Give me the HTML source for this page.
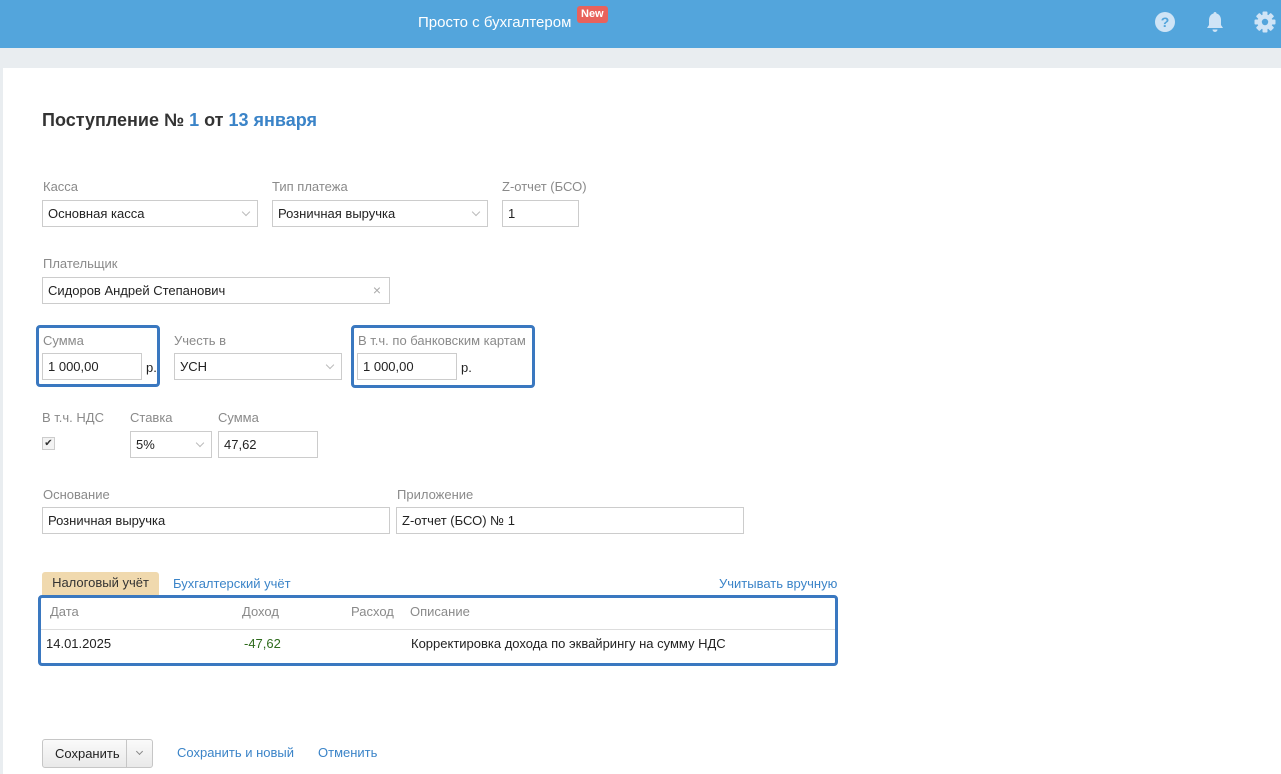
<!DOCTYPE html>
<html><head><meta charset="utf-8"><style>
*{box-sizing:border-box;margin:0;padding:0}
body{width:1281px;height:774px;overflow:hidden;background:#fff;font-family:"Liberation Sans",Arial,sans-serif;font-size:13px;color:#222;position:relative}
.a{position:absolute}
.hdr{left:0;top:0;width:1281px;height:48px;background:#53a5dc}
.band{left:0;top:48px;width:1281px;height:20px;background:#e9edf0}
.lstrip{left:0;top:68px;width:3px;height:706px;background:#e9edf0}
.lbl{color:#8a8a8a;font-size:13px}
.in{border:1px solid #ccc;height:27px;line-height:25px;padding-left:5px;background:#fff;font-size:13px;color:#222}
.chev{position:absolute;right:8px;top:8px;width:6px;height:6px;border-right:1px solid #bbb;border-bottom:1px solid #bbb;transform:rotate(45deg)}
.hl{border:3px solid #3a78c0;border-radius:4px}
.link{color:#3b84c8}
</style></head><body>
<div class="a hdr"></div>
<div class="a" style="left:418px;top:14px;color:#fff;font-size:15px">Просто с бухгалтером</div>
<div class="a" style="left:577px;top:6px;background:#e8625c;color:#fff;font-size:11px;font-weight:bold;padding:1px 4px;border-radius:3px;height:17px;line-height:15px">New</div>
<svg class="a" style="left:1154px;top:11px" width="22" height="22" viewBox="0 0 22 22"><circle cx="11" cy="11" r="10" fill="#cfe4f6"/><text x="11" y="16" text-anchor="middle" font-family="Liberation Sans" font-weight="bold" font-size="14" fill="#53a5dc">?</text></svg>
<svg class="a" style="left:1205px;top:11px" width="20" height="22" viewBox="0 0 20 22"><path d="M10 1c1 0 1.5.7 1.5 1.5C14.5 3.3 16 6 16 9v5l2 3H2l2-3V9c0-3 1.5-5.7 4.5-6.5C8.5 1.7 9 1 10 1z" fill="#cfe4f6"/><path d="M7.5 18.5h5a2.5 2.5 0 0 1-5 0z" fill="#cfe4f6"/></svg>
<svg class="a" style="left:1254px;top:11px" width="22" height="22" viewBox="0 0 22 22"><g fill="#cfe4f6"><circle cx="11" cy="11" r="7.5"/><g><rect x="8.5" y="0.5" width="5" height="5" rx="1"/><rect x="8.5" y="16.5" width="5" height="5" rx="1"/><rect x="0.5" y="8.5" width="5" height="5" rx="1"/><rect x="16.5" y="8.5" width="5" height="5" rx="1"/></g><g transform="rotate(45 11 11)"><rect x="8.5" y="0.5" width="5" height="5" rx="1"/><rect x="8.5" y="16.5" width="5" height="5" rx="1"/><rect x="0.5" y="8.5" width="5" height="5" rx="1"/><rect x="16.5" y="8.5" width="5" height="5" rx="1"/></g></g><circle cx="11" cy="11" r="3.2" fill="#53a5dc"/></svg>
<div class="a band"></div>
<div class="a lstrip"></div>

<div class="a" style="left:42px;top:110px;font-size:18px;font-weight:bold;color:#333">Поступление № <span class="link">1</span> от <span class="link">13 января</span></div>

<div class="a lbl" style="left:43px;top:179px">Касса</div>
<div class="a lbl" style="left:272px;top:179px">Тип платежа</div>
<div class="a lbl" style="left:502px;top:179px">Z-отчет (БСО)</div>
<div class="a in" style="left:42px;top:200px;width:216px">Основная касса<span class="chev"></span></div>
<div class="a in" style="left:272px;top:200px;width:216px">Розничная выручка<span class="chev"></span></div>
<div class="a in" style="left:502px;top:200px;width:77px">1</div>

<div class="a lbl" style="left:43px;top:256px">Плательщик</div>
<div class="a in" style="left:42px;top:277px;width:348px">Сидоров Андрей Степанович<span class="a" style="right:8px;top:0;color:#aaa;font-size:14px">×</span></div>

<div class="a hl" style="left:36px;top:325px;width:124px;height:62px"></div>
<div class="a lbl" style="left:43px;top:333px">Сумма</div>
<div class="a in" style="left:42px;top:353px;width:100px">1 000,00</div>
<div class="a" style="left:146px;top:360px">р.</div>
<div class="a lbl" style="left:174px;top:333px">Учесть в</div>
<div class="a in" style="left:174px;top:353px;width:168px">УСН<span class="chev"></span></div>
<div class="a hl" style="left:351px;top:325px;width:184px;height:63px"></div>
<div class="a lbl" style="left:358px;top:333px">В т.ч. по банковским картам</div>
<div class="a in" style="left:357px;top:353px;width:100px">1 000,00</div>
<div class="a" style="left:461px;top:360px">р.</div>

<div class="a lbl" style="left:42px;top:410px">В т.ч. НДС</div>
<div class="a lbl" style="left:130px;top:410px">Ставка</div>
<div class="a lbl" style="left:218px;top:410px">Сумма</div>
<div class="a" style="left:42px;top:437px;width:13px;height:13px;border:1px solid #ccc;background:#f3f3f3;font-size:10px;line-height:11px;text-align:center;color:#333">✔</div>
<div class="a in" style="left:130px;top:431px;width:82px">5%<span class="chev"></span></div>
<div class="a in" style="left:218px;top:431px;width:100px">47,62</div>

<div class="a lbl" style="left:43px;top:487px">Основание</div>
<div class="a lbl" style="left:397px;top:487px">Приложение</div>
<div class="a in" style="left:42px;top:507px;width:348px">Розничная выручка</div>
<div class="a in" style="left:396px;top:507px;width:348px">Z-отчет (БСО) № 1</div>

<div class="a" style="left:42px;top:572px;width:117px;height:24px;background:#f0d9ae;border-radius:3px 3px 0 0;line-height:22px;text-align:center;color:#333">Налоговый учёт</div>
<div class="a link" style="left:173px;top:576px">Бухгалтерский учёт</div>
<div class="a link" style="left:719px;top:576px">Учитывать вручную</div>
<div class="a hl" style="left:38px;top:595px;width:800px;height:71px"></div>
<div class="a lbl" style="left:50px;top:604px">Дата</div>
<div class="a lbl" style="left:242px;top:604px">Доход</div>
<div class="a lbl" style="left:351px;top:604px">Расход</div>
<div class="a lbl" style="left:410px;top:604px">Описание</div>
<div class="a" style="left:41px;top:629px;width:794px;height:1px;background:#ddd"></div>
<div class="a" style="left:46px;top:636px">14.01.2025</div>
<div class="a" style="left:244px;top:636px;color:#2e6b1c">-47,62</div>
<div class="a" style="left:411px;top:636px">Корректировка дохода по эквайрингу на сумму НДС</div>

<div class="a" style="left:42px;top:739px;width:111px;height:29px;border:1px solid #c6c6c6;border-radius:3px;background:linear-gradient(#fafafa,#e9e9e9)"></div>
<div class="a" style="left:126px;top:740px;width:1px;height:27px;background:#c6c6c6"></div>
<div class="a" style="left:55px;top:746px;color:#222">Сохранить</div>
<div class="a" style="left:137px;top:749px;width:5px;height:5px;border-right:1px solid #888;border-bottom:1px solid #888;transform:rotate(45deg)"></div>
<div class="a link" style="left:177px;top:745px">Сохранить и новый</div>
<div class="a link" style="left:318px;top:745px">Отменить</div>
</body></html>
